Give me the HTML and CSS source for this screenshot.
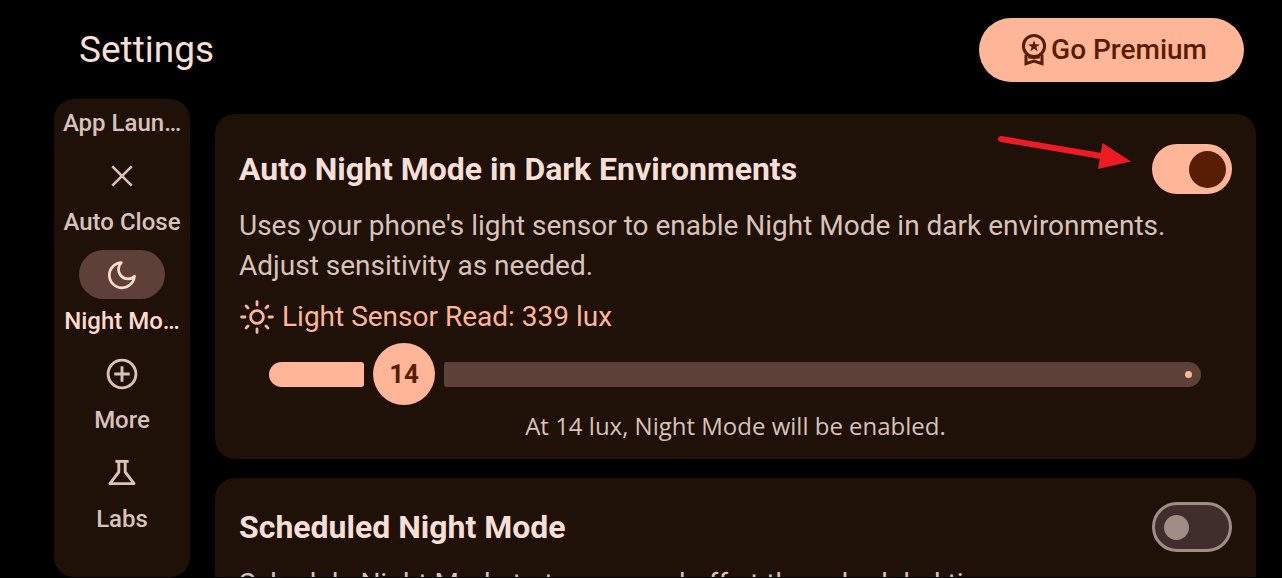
FILE: index.html
```html
<!DOCTYPE html>
<html lang="en">
<head>
<meta charset="utf-8">
<meta name="viewport" content="width=device-width, initial-scale=1">
<title>Settings</title>
<link rel="stylesheet" href="styles.css">
</head>
<body>
<div class="app">
  <header class="topbar">
    <h1 class="topbar-title">Settings</h1>
    <button class="premium" type="button">
      <svg class="premium-icon" viewBox="0 0 26 34" aria-hidden="true">
        <g fill="none" stroke="currentColor" stroke-width="3">
          <circle cx="13" cy="13" r="10.6"/>
          <path d="M5 21.5V30.6L13 28L21 30.6V21.5"/>
        </g>
        <path fill="currentColor" d="M13 7.2l1.45 4.1 4.35.1-3.45 2.65 1.25 4.15L13 15.75 9.4 18.2l1.25-4.15L7.2 11.4l4.35-.1zM7 23.8h12v1.4c-4 1-8 1-12 0z"/>
      </svg>
      <span>Go Premium</span>
    </button>
  </header>
  <div class="content">
    <nav class="rail" aria-label="Settings sections">
      <a class="rail-item" href="#launch"><span class="rail-label">App Laun…</span></a>
      <a class="rail-item" href="#close">
        <span class="rail-pill"><svg class="rail-icon" viewBox="0 0 32 32" aria-hidden="true"><path d="M6.3 6.3L25.7 25.7M25.7 6.3L6.3 25.7" fill="none" stroke="currentColor" stroke-width="2.6"/></svg></span>
        <span class="rail-label">Auto Close</span>
      </a>
      <a class="rail-item rail-item-active" href="#night" aria-current="page">
        <span class="rail-pill"><svg class="rail-icon" viewBox="0 0 32 32" aria-hidden="true"><path d="M15.4 3.6A12.6 12.6 0 1 0 28.5 17.2A8.9 8.9 0 0 1 15.4 3.6Z" fill="none" stroke="currentColor" stroke-width="2.7" stroke-linejoin="round"/></svg></span>
        <span class="rail-label">Night Mo…</span>
      </a>
      <a class="rail-item" href="#more">
        <span class="rail-pill"><svg class="rail-icon" viewBox="0 0 32 32" aria-hidden="true"><g fill="none" stroke="currentColor" stroke-width="2.9"><circle cx="16" cy="16" r="13.9"/><path d="M16 8.3V23.7M8.3 16H23.7"/></g></svg></span>
        <span class="rail-label">More</span>
      </a>
      <a class="rail-item" href="#labs">
        <span class="rail-pill"><svg class="rail-icon" viewBox="0 0 32 32" aria-hidden="true"><g fill="none" stroke="currentColor" stroke-width="2.9" stroke-linejoin="round"><path d="M9.4 4.4H22.6"/><path d="M12.8 4.500V15L3.900 26.600H28.100L19.200 15V4.500"/></g></svg></span>
        <span class="rail-label">Labs</span>
      </a>
    </nav>
    <main class="cards">
      <section class="card">
        <div class="card-head card-head-tall">
          <label class="card-title" for="auto">Auto Night Mode in Dark Environments</label>
          <input class="switch" id="auto" type="checkbox" role="switch" checked>
        </div>
        <p class="card-text">Uses your phone's light sensor to enable Night Mode in dark environments. Adjust sensitivity as needed.</p>
        <p class="sensor">
          <svg class="sensor-icon" viewBox="0 0 34 34" aria-hidden="true"><g fill="none" stroke="currentColor" stroke-width="2.8" stroke-linecap="round"><circle cx="17" cy="17" r="6.4"/><path d="M17 1.6V5M17 29V32.4M1.6 17H5M29 17H32.4M6.1 6.1L8 8M26 26L27.9 27.9M6.1 27.9L8 26M26 8L27.9 6.1"/></g></svg>
          <span>Light Sensor Read: 339 lux</span>
        </p>
        <div class="slider">
          <span class="slider-fill"></span>
          <output class="slider-thumb" for="lux">14</output>
          <span class="slider-rest"></span>
          <input class="slider-input" id="lux" type="range" min="0" max="100" value="14" aria-label="Light sensitivity in lux">
        </div>
        <p class="caption">At 14 lux, Night Mode will be enabled.</p>
        <svg class="pointer" viewBox="0 0 136 36" aria-hidden="true"><path d="M4 5L104 22" stroke="#ed1c24" stroke-width="6" stroke-linecap="round"/><path d="M105.500 9L134 27.500L101 35Z" fill="#ed1c24"/></svg>
      </section>
      <section class="card">
        <div class="card-head">
          <label class="card-title" for="scheduled">Scheduled Night Mode</label>
          <input class="switch" id="scheduled" type="checkbox" role="switch">
        </div>
        <p class="card-text">Schedule Night Mode to turn on and off at the scheduled time.</p>
      </section>
    </main>
  </div>
</div>
</body>
</html>
```
FILE: styles.css
```css
* {
  box-sizing: border-box;
}

body {
  margin: 0;
  background: #000;
  color: #f7dfd7;
  font-family: Roboto, "Liberation Sans", sans-serif;
}

.app {
  display: flex;
  flex-direction: column;
  height: 100vh;
  padding-bottom: 1px;
  overflow: hidden;
}

.topbar {
  display: flex;
  flex: none;
  align-items: center;
  justify-content: space-between;
  padding: 18px 38px 17px 79px;
}

.topbar-title {
  margin: 0;
  font-size: 37px;
  font-weight: 400;
  line-height: 64px;
}

.premium {
  display: flex;
  align-items: center;
  gap: 4px;
  height: 64px;
  padding: 0 37px 0 42px;
  border: 0;
  border-radius: 32px;
  background: #ffb598;
  color: #591d04;
  font: 500 28px/32px Roboto, "Liberation Sans", sans-serif;
}

.premium-icon {
  width: 26px;
  height: 34px;
}

.content {
  display: flex;
  flex: 1;
  gap: 25px;
  min-height: 0;
  padding: 0 26px 0 54px;
}

.rail {
  display: flex;
  flex: none;
  flex-direction: column;
  gap: 14px;
  width: 136px;
  padding-top: 10px;
  border-radius: 20px;
  background: #1f1008;
}

.rail-item {
  display: flex;
  flex-direction: column;
  align-items: center;
  gap: 8px;
  color: #d8c2ba;
  text-decoration: none;
}

.rail-item-active {
  color: #ffdbcf;
}

.rail-pill {
  display: flex;
  align-items: center;
  justify-content: center;
  width: 86px;
  height: 49px;
  border-radius: 25px;
}

.rail-item-active .rail-pill {
  background: #5d4037;
}

.rail-icon {
  width: 32px;
  height: 32px;
}

.rail-label {
  font-size: 24px;
  font-weight: 500;
  line-height: 28px;
  white-space: nowrap;
}

.cards {
  display: flex;
  flex: 1;
  flex-direction: column;
  gap: 19px;
  min-width: 0;
  padding-top: 15px;
  overflow: hidden;
}

.card {
  position: relative;
  flex: none;
  padding: 24px 24px 17px;
  border-radius: 20px;
  background: #1f1008;
}

.card-head {
  display: flex;
  align-items: center;
  justify-content: space-between;
  margin-bottom: 12px;
}

.card-head-tall {
  padding-top: 6px;
}

.card-title {
  color: #f7dfd7;
  font-size: 32px;
  font-weight: 700;
  line-height: 40px;
}

.switch {
  display: flex;
  flex: none;
  align-items: center;
  appearance: none;
  width: 80px;
  height: 50px;
  margin: 0;
  padding: 0 9px;
  border: 3px solid #a08d86;
  border-radius: 25px;
  background: #3f2e2b;
}

.switch::before {
  width: 25px;
  height: 25px;
  border-radius: 50%;
  background: #a08d86;
  content: "";
}

.switch:checked {
  justify-content: flex-end;
  padding: 0 3px;
  border-color: #ffb598;
  background: #ffb598;
}

.switch:checked::before {
  width: 37px;
  height: 37px;
  background: #591d04;
}

.card-text {
  margin: 0;
  color: #d8c2ba;
  font-size: 28px;
  line-height: 40px;
}

.sensor {
  display: flex;
  align-items: center;
  gap: 8px;
  margin: 11px 0 6px;
  color: #ffb598;
  font-size: 28px;
  line-height: 40px;
}

.sensor-icon {
  width: 34px;
  height: 34px;
  margin-left: 1px;
}

.slider {
  position: relative;
  display: flex;
  align-items: center;
  gap: 9px;
  margin: 0 31px 0 30px;
}

.slider-fill {
  flex: 0 0 10.2%;
  height: 25px;
  border-radius: 13px 3px 3px 13px;
  background: #ffb598;
}

.slider-thumb {
  flex: none;
  width: 62px;
  height: 62px;
  border-radius: 50%;
  background: #ffb598;
  color: #591d04;
  font-size: 26px;
  font-weight: 700;
  line-height: 62px;
  text-align: center;
}

.slider-rest {
  display: flex;
  flex: 1;
  align-items: center;
  justify-content: flex-end;
  height: 25px;
  padding-right: 9px;
  border-radius: 3px 13px 13px 3px;
  background: #5d4037;
}

.slider-rest::after {
  width: 7px;
  height: 7px;
  border-radius: 50%;
  background: #ffb598;
  content: "";
}

.slider-input {
  position: absolute;
  inset: 0;
  width: 100%;
  height: 100%;
  margin: 0;
  opacity: 0;
}

.caption {
  margin: 5px 0 0;
  color: #d8c2ba;
  font-family: "Open Sans", Roboto, sans-serif;
  font-size: 24px;
  line-height: 32px;
  text-align: center;
}

.pointer {
  position: absolute;
  top: 20px;
  right: 123px;
  width: 136px;
  height: 36px;
}
```
